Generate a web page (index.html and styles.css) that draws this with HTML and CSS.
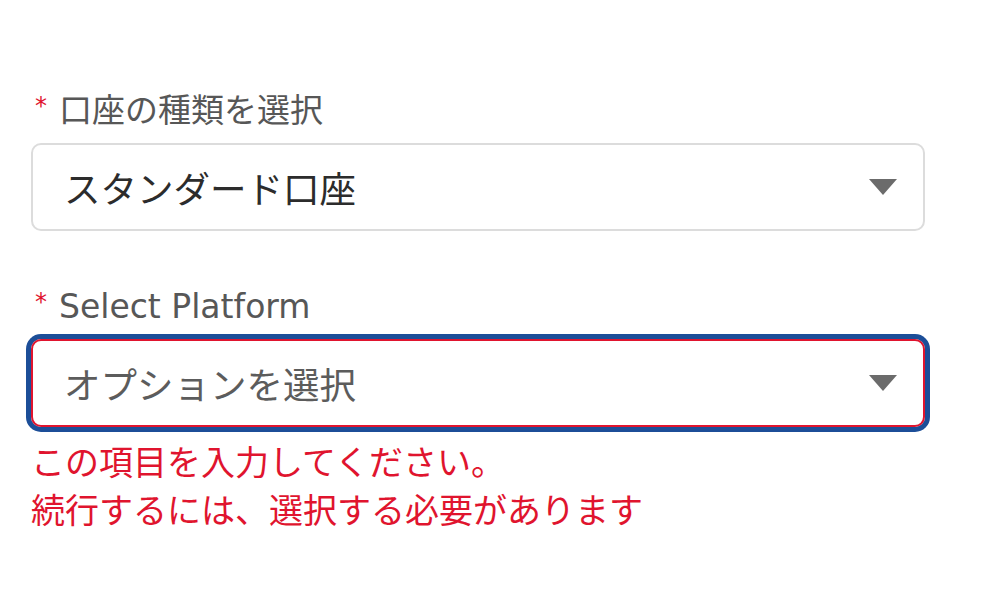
FILE: index.html
```html
<!DOCTYPE html>
<html lang="ja">
<head>
<meta charset="utf-8">
<link rel="stylesheet" href="styles.css">
</head>
<body>
<div class="form">
  <div class="field">
    <label class="label"><span class="req">*</span>口座の種類を選択</label>
    <div class="select">
      <span class="value">スタンダード口座</span>
      <svg class="caret" width="28" height="16" viewBox="0 0 28 16"><path d="M0 0H28L14 16Z" fill="#6b6b6b"/></svg>
    </div>
  </div>
  <div class="field field-2">
    <label class="label"><span class="req">*</span>Select Platform</label>
    <div class="select select-error">
      <span class="value placeholder">オプションを選択</span>
      <svg class="caret" width="28" height="16" viewBox="0 0 28 16"><path d="M0 0H28L14 16Z" fill="#6b6b6b"/></svg>
    </div>
    <div class="error">
      <div>この項目を入力してください。</div>
      <div>続行するには、選択する必要があります</div>
    </div>
  </div>
</div>
</body>
</html>
```
FILE: styles.css
```css
html, body {
  margin: 0;
  padding: 0;
  background: #ffffff;
}
body {
  font-family: "DejaVu Sans", "Noto Sans CJK JP", sans-serif;
}
.form {
  padding: 91px 75px 0 31px;
  width: 894px;
}
.field-2 {
  margin-top: 56px;
}
.label {
  display: flex;
  align-items: center;
  height: 40px;
  line-height: 40px;
  font-size: 33px;
  color: #575757;
  margin-bottom: 12px;
  font-family: "DejaVu Sans", "Noto Sans CJK JP", sans-serif;
}
.req {
  color: #e0142e;
  font-size: 24px;
  margin: -10px 12px 0 4px;
  line-height: 1;
}
.select {
  box-sizing: border-box;
  height: 88px;
  border: 2px solid #dcdcdc;
  border-radius: 10px;
  display: flex;
  align-items: center;
  justify-content: space-between;
  padding: 0 26px 0 31px;
}
.select-error {
  border-color: #e0142e;
  box-shadow: 0 0 0 5px #1c4e98;
}
.value {
  font-size: 36.5px;
  color: #2c2c2c;
  font-family: "Noto Sans CJK JP", sans-serif;
}
.placeholder {
  color: #5c5c5c;
}
.caret {
  display: block;
}
.error {
  margin-top: 10px;
  color: #e0142e;
  font-size: 34px;
  line-height: 48px;
  font-family: "Noto Sans CJK JP", sans-serif;
}
```
